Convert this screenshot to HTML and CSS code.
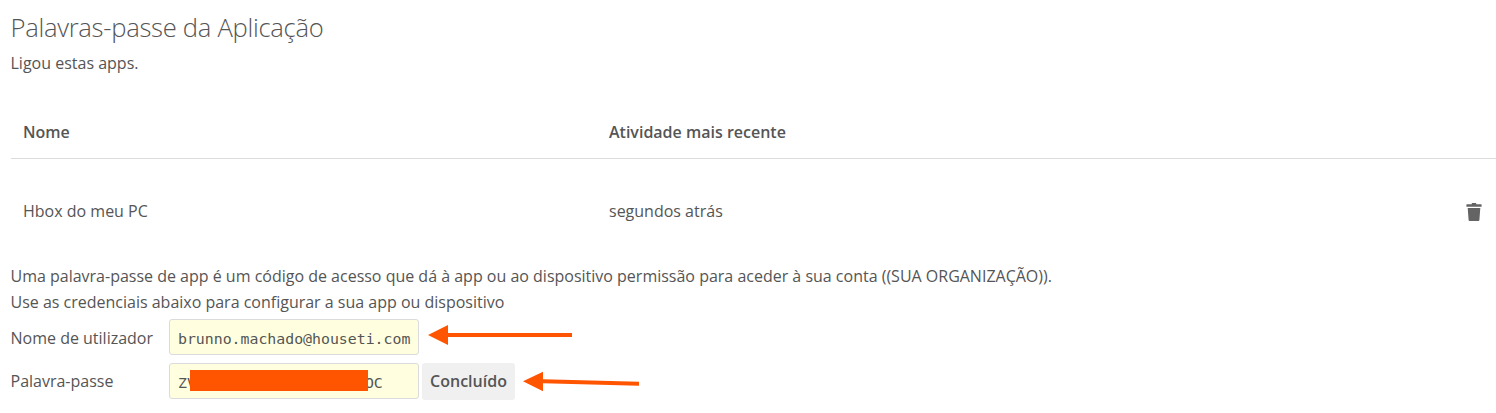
FILE: index.html
```
<!DOCTYPE html>
<html lang="pt">
<head>
<meta charset="utf-8">
<title>Palavras-passe da Aplicação</title>
<link rel="stylesheet" href="styles.css">
</head>
<body>
<main class="section">
  <h2 class="title">Palavras-passe da Aplicação</h2>
  <p class="hint">Ligou estas apps.</p>
  <div class="table">
    <div class="row head"><span>Nome</span><span>Atividade mais recente</span></div>
    <div class="row"><span>Hbox do meu PC</span><span>segundos atrás</span>
      <svg class="trash" width="16" height="18" viewBox="0 0 16 18"><path fill="#646464" d="M5.8 0h4.4v1.2h4.8q.6 0 .6.6v2H.4v-2q0-.6.6-.6h4.8zM1.7 5h12.6l-.9 12q-.1 1-.9 1h-9q-.8 0-.9-1z"/></svg>
    </div>
  </div>
  <p class="info">Uma palavra-passe de app é um código de acesso que dá à app ou ao dispositivo permissão para aceder à sua conta ((SUA ORGANIZAÇÃO)).<br>Use as credenciais abaixo para configurar a sua app ou dispositivo</p>
  <div class="field">
    <label class="label label-user">Nome de utilizador</label>
    <div class="input">brunno.machado@houseti.com</div>
    <svg class="arrow arrow-user" width="145" height="22" viewBox="0 0 145 22"><path fill="#ff5500" d="M0 11 20 1v8h124v4H20v8z"/></svg>
  </div>
  <div class="field">
    <label class="label">Palavra-passe</label>
    <div class="input">ZV<span class="gap"></span>OC<span class="redaction"></span></div>
    <button class="done">Concluído</button>
    <svg class="arrow arrow-pass" width="118" height="22" viewBox="0 0 118 22"><path fill="#ff5500" d="M0 10.3 20 .7v7.6l96 2.4v4L20 12.3v8z"/></svg>
  </div>
</main>
</body>
</html>
```
FILE: styles.css
```
* { box-sizing: border-box; }
body {
  margin: 0;
  background: #fff;
  color: #555;
  font: 16px/26px "Open Sans", sans-serif;
  overflow: hidden;
}
.section { padding: 12px 0 0 11px; }
.title { margin: 0; font-size: 25.6px; font-weight: 300; line-height: 32px; letter-spacing: -0.29px; text-indent: -0.5px; }
.hint { margin: 6px 0 30px; text-indent: -0.5px; }
.row {
  display: grid;
  grid-template-columns: 586px 1fr 30px;
  align-items: center;
  height: 104px;
  padding-left: 12px;
}
.head { height: 53px; border-bottom: 1px solid #dbdbdb; font-weight: 600; }
.trash { margin-top: 1px; }
.info { margin: 0 0 4px -0.5px; letter-spacing: -0.004px; }
.field { display: flex; align-items: flex-start; height: 44px; }
.label { width: 158px; line-height: 37px; text-indent: -0.5px; }
.label-user { line-height: 39px; }
.input {
  position: relative;
  width: 250px;
  height: 36px;
  padding: 1px 8px 0;
  border: 1px solid #dbdbdb;
  border-radius: 3px;
  background: #ffffe0;
  font: 14.85px/36px "DejaVu Sans Mono", monospace;
  white-space: nowrap;
}
.gap { display: inline-block; width: 169px; }
.redaction {
  position: absolute;
  left: 20px;
  top: 6px;
  width: 178px;
  height: 21px;
  background: #ff5500;
}
.done {
  width: 93px;
  height: 37px;
  margin-left: 3px;
  padding: 0 0 1px;
  border: 0;
  border-radius: 3px;
  background: #f0f0f0;
  color: #555;
  font: 600 16px/36px "Open Sans", sans-serif;
}
.arrow-user { margin: 5px 0 0 9px; }
.arrow-pass { margin: 8px 0 0 8px; }
```
